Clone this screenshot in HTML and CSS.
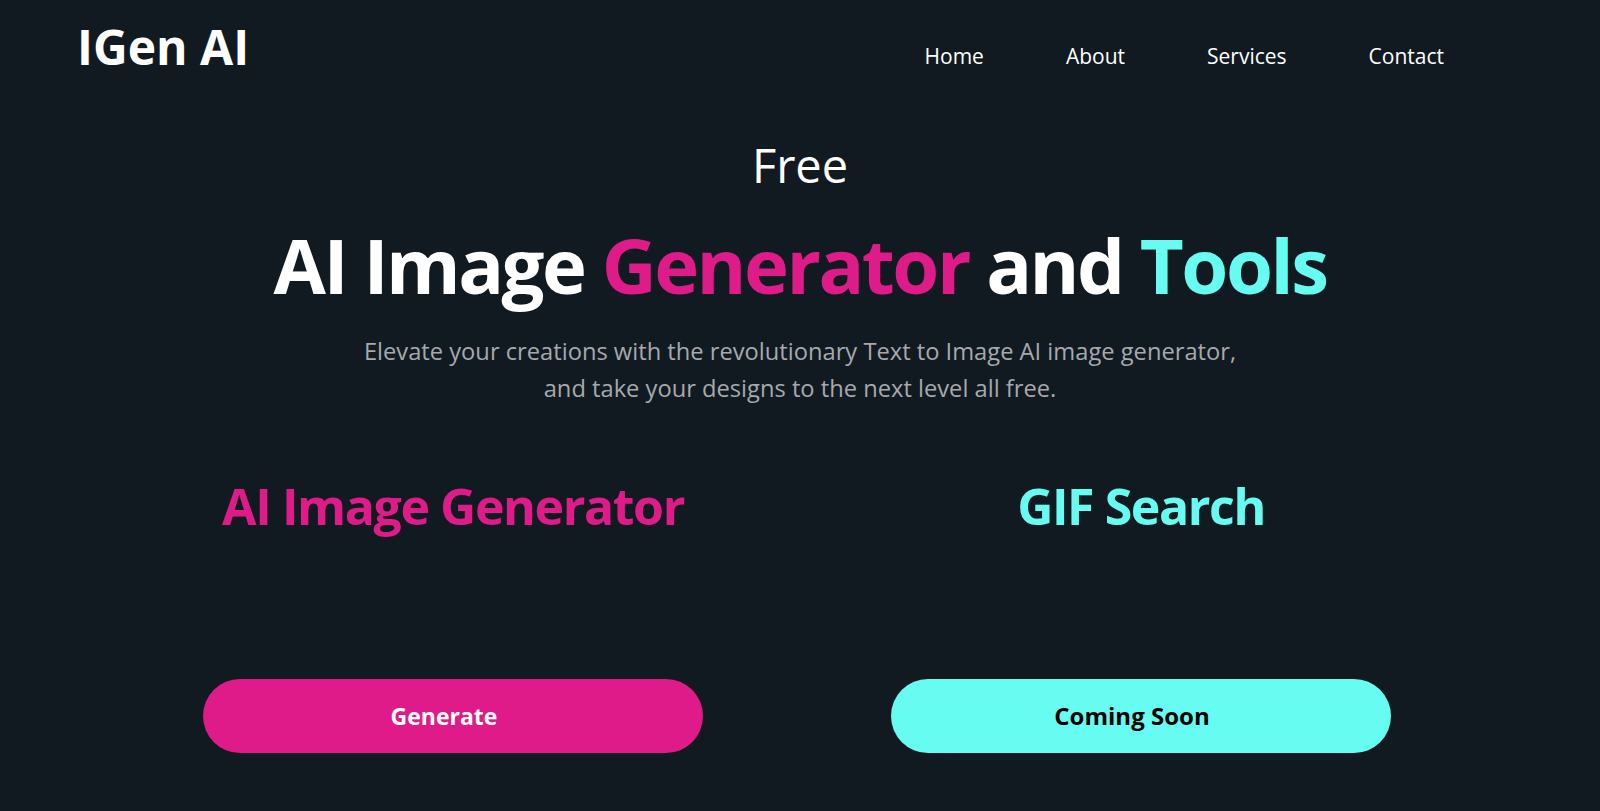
FILE: index.html
```html
<!DOCTYPE html>
<html lang="en">
<head>
    <meta charset="UTF-8">
    <meta name="viewport" content="width=device-width, initial-scale=1.0">
    <title>IGen AI</title>
    <link rel="stylesheet" href="styles.css">
</head>
<body>
    <header class="header">
        <a href="#" class="logo">IGen AI</a>
        <nav class="nav">
            <a href="#">Home</a>
            <a href="#">About</a>
            <a href="#">Services</a>
            <a href="#">Contact</a>
        </nav>
    </header>

    <section class="hero">
        <p class="hero-kicker">Free</p>
        <h1 class="hero-title">AI Image <span class="pink">Generator</span> and <span class="cyan">Tools</span></h1>
        <p class="hero-text">Elevate your creations with the revolutionary Text to Image AI image generator,<br>and take your designs to the next level all free.</p>
    </section>

    <section class="tools">
        <div class="tool">
            <h2 class="tool-title pink">AI Image Generator</h2>
            <button class="btn btn-pink">Generate</button>
        </div>
        <div class="tool">
            <h2 class="tool-title cyan">GIF Search</h2>
            <button class="btn btn-cyan">Coming Soon</button>
        </div>
    </section>
</body>
</html>
```

FILE: styles.css
```css
* {
    margin: 0;
    padding: 0;
    box-sizing: border-box;
}
body {
    font-family: 'Open Sans', sans-serif;
    background: #111a21;
    color: #fff;
    height: 100vh;
    overflow: hidden;
}
a {
    color: #fff;
    text-decoration: none;
}
.pink {
    color: #de1b89;
}
.cyan {
    color: #66fcf1;
}

.header {
    display: flex;
    justify-content: space-between;
    align-items: flex-start;
    padding: 14px 156px 0 77px;
}
.logo {
    font-size: 48px;
    font-weight: 700;
    line-height: 65px;
}
.nav {
    display: flex;
    gap: 82px;
    padding-top: 27px;
}
.nav a {
    font-size: 21px;
    line-height: 30px;
}

.hero {
    text-align: center;
    margin-top: 58px;
}
.hero-kicker {
    font-size: 47px;
    line-height: 1.2;
}
.hero-title {
    font-size: 76px;
    font-weight: 700;
    letter-spacing: -2.5px;
    line-height: 1.2;
    margin-top: 26px;
}
.hero-text {
    font-size: 23.7px;
    line-height: 37.5px;
    color: #a6a9ad;
    margin-top: 22px;
}

.tools {
    display: grid;
    grid-template-columns: 1fr 1fr;
    width: 1376px;
    margin: 68px 0 0 109px;
}
.tool {
    display: flex;
    flex-direction: column;
    align-items: center;
    text-align: center;
}
.tool-title {
    font-size: 50px;
    font-weight: 700;
    letter-spacing: -1.4px;
    line-height: 1.2;
}
.btn {
    width: 500px;
    height: 74px;
    margin-top: 143px;
    padding-right: 18px;
    border: none;
    border-radius: 40px;
    font-family: inherit;
    font-size: 24px;
    font-weight: 700;
    cursor: pointer;
}
.btn-pink {
    background: #de1b89;
    color: #fff;
    font-size: 23px;
}
.btn-cyan {
    background: #66fcf1;
    color: #000;
}
```
